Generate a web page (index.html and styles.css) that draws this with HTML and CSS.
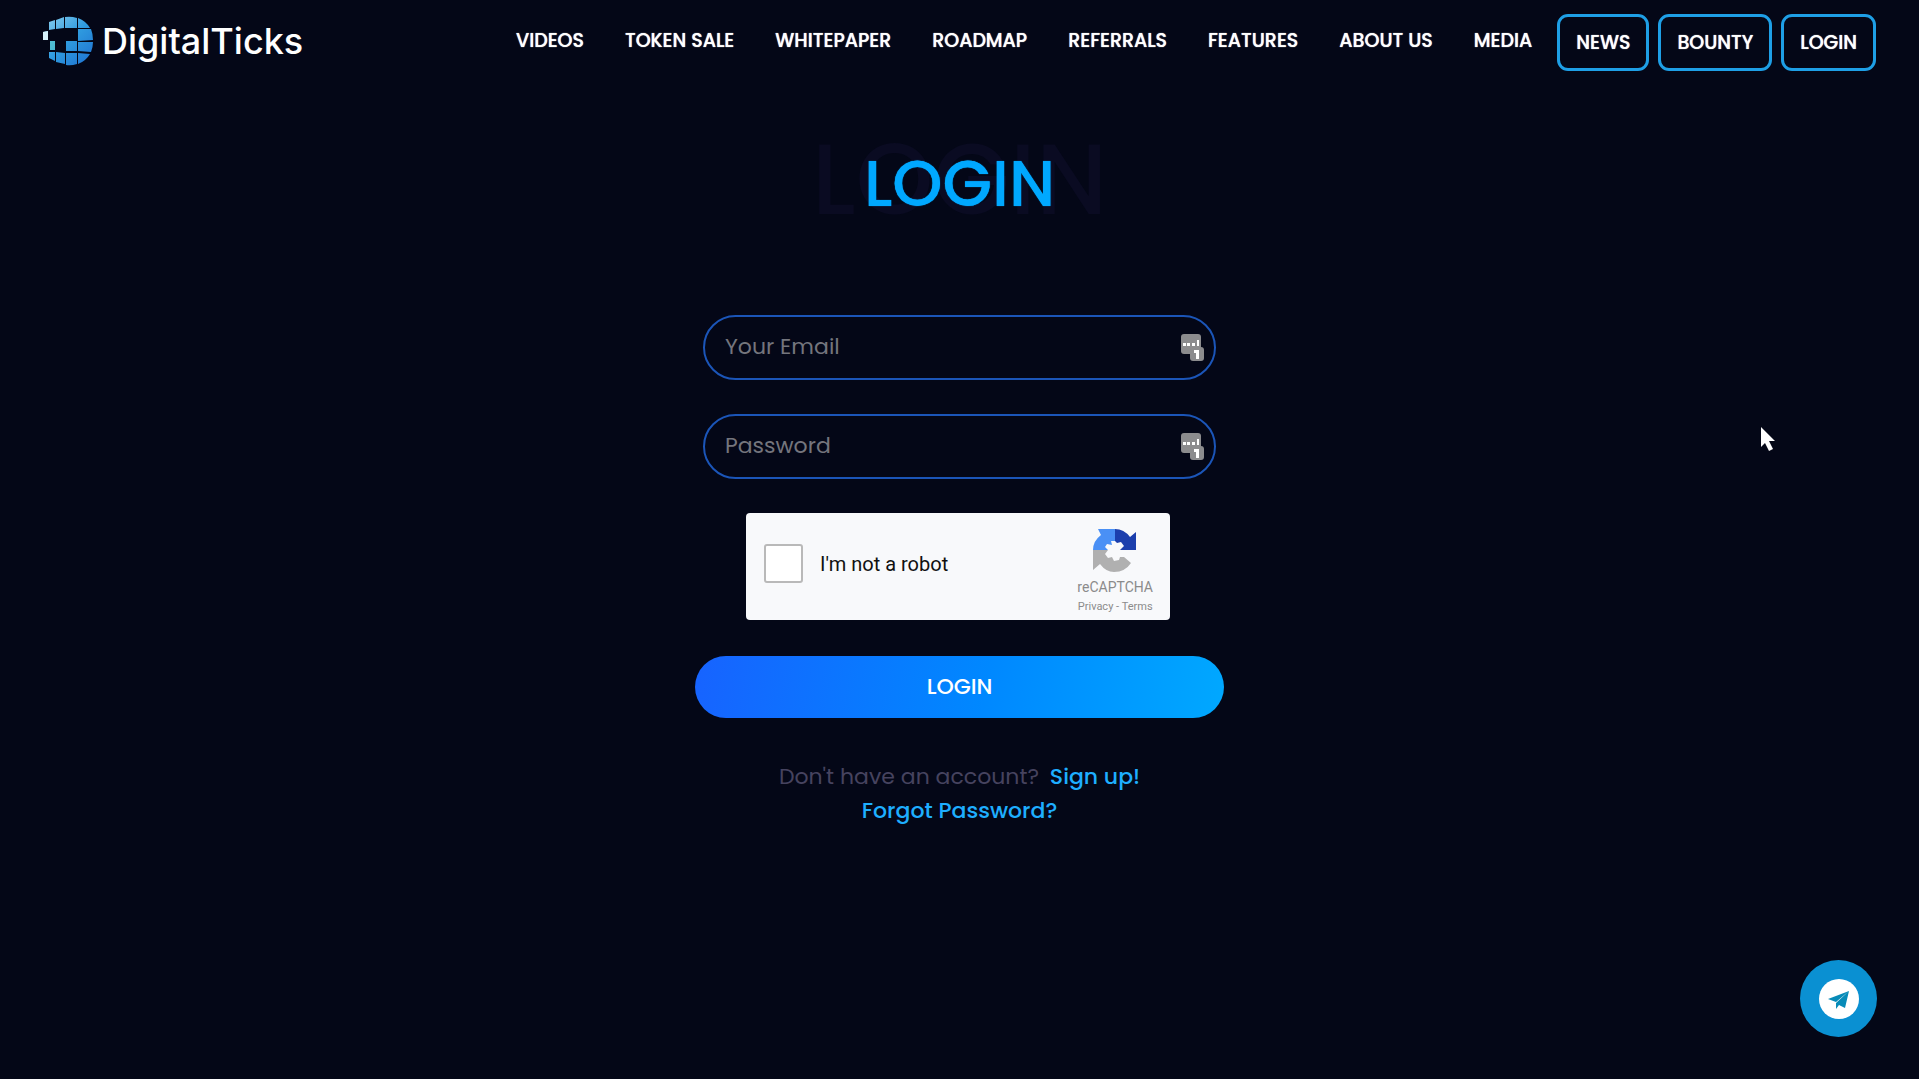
FILE: index.html
```html
<!DOCTYPE html>
<html lang="en">
<head>
<meta charset="utf-8">
<meta name="viewport" content="width=device-width, initial-scale=1">
<title>DigitalTicks - Login</title>
<link rel="stylesheet" href="styles.css">
</head>
<body>
<header class="header">
  <a class="brand" href="#">
    <svg class="brand-mark" viewBox="0 0 50 50" aria-hidden="true">
      <defs>
        <linearGradient id="globe" x1="0" y1="0" x2="1" y2="1">
          <stop offset="0" stop-color="#8ed0ee"/>
          <stop offset=".5" stop-color="#2f9bdf"/>
          <stop offset="1" stop-color="#1d6fd0"/>
        </linearGradient>
      </defs>
      <path fill="url(#globe)" d="M6 6l6-2v9l-6 1zM13 4l8-3v11l-8 1zM22 1q6-1 12 1v10l-12 0zM35 2q8 3 12 10h-12zM35 13h13q2 5 2 11l-15 1zM0 16l5-1v9H0zM35 26h15q0 5-2 10l-13-1zM7 25h5v9H7zM23 25h11v10H23zM6 36h6v9l-6-3zM13 36l9 1v11l-9-2zM23 37h11v11q-6 2-11 1zM35 37l12 1q-4 7-12 10z"/>
      <path fill="#54c9c8" opacity=".6" d="M7 25h5v9H7z"/>
      <path fill="#d5f0fa" d="M0 16l5-1v9H0z"/>
    </svg>
    <span class="brand-name">DigitalTicks</span>
  </a>
  <nav class="nav">
    <a href="#">VIDEOS</a>
    <a href="#">TOKEN SALE</a>
    <a href="#">WHITEPAPER</a>
    <a href="#">ROADMAP</a>
    <a href="#">REFERRALS</a>
    <a href="#">FEATURES</a>
    <a href="#">ABOUT US</a>
    <a href="#">MEDIA</a>
  </nav>
  <div class="nav-boxes">
    <a href="#">NEWS</a>
    <a href="#">BOUNTY</a>
    <a href="#">LOGIN</a>
  </div>
</header>

<main class="login">
  <h1 class="title" data-shadow="LOGIN">LOGIN</h1>
  <form class="form">
    <div class="field">
      <input type="email" placeholder="Your Email" aria-label="Your Email">
      <svg class="field-icon" viewBox="0 0 23 27" aria-hidden="true">
        <rect width="20" height="20" rx="3" fill="#8c8c8e"/>
        <path d="M2 9h3v3H2zM6 9h3v3H6zM11 9h3v3h-3zM16 6h2v6h-2z" fill="#fff"/>
        <rect x="9" y="13" width="14" height="14" rx="3" fill="#8c8c8e"/>
        <path d="M13 16h5v9h-3v-6h-2z" fill="#fff"/>
      </svg>
    </div>
    <div class="field">
      <input type="password" placeholder="Password" aria-label="Password">
      <svg class="field-icon" viewBox="0 0 23 27" aria-hidden="true">
        <rect width="20" height="20" rx="3" fill="#8c8c8e"/>
        <path d="M2 9h3v3H2zM6 9h3v3H6zM11 9h3v3h-3zM16 6h2v6h-2z" fill="#fff"/>
        <rect x="9" y="13" width="14" height="14" rx="3" fill="#8c8c8e"/>
        <path d="M13 16h5v9h-3v-6h-2z" fill="#fff"/>
      </svg>
    </div>
    <div class="captcha">
      <label class="captcha-check"><input type="checkbox">I'm not a robot</label>
      <div class="captcha-brand">
        <svg class="captcha-logo" viewBox="0 0 44 44" aria-hidden="true">
          <path fill="#4a90f5" d="M5 1h17v12l-4 0 1 4-5-1-2 3 3 3H0Q0 13 8 7z"/>
          <path fill="#1c3fad" d="M22 1q9 0 15 8l6-5v18H27l4-4-3-4-4 1-2-2z"/>
          <path fill="#b0b0b0" d="M0 22h15l-3 4 3 4 4-1 2 4 5-1 1-3 4 0 7 6q-6 9-17 9-8 0-14-8l-7 6z"/>
        </svg>
        <span class="captcha-name">reCAPTCHA</span>
        <span class="captcha-links"><a href="#">Privacy</a> - <a href="#">Terms</a></span>
      </div>
    </div>
    <button class="submit" type="submit">LOGIN</button>
  </form>
  <div class="links">
    <p>Don't have an account? <a class="signup" href="#">Sign up!</a></p>
    <p><a href="#">Forgot Password?</a></p>
  </div>
</main>

<a class="telegram" href="#" aria-label="Telegram">
  <svg viewBox="0 0 40 40" aria-hidden="true">
    <circle cx="20" cy="20" r="20" fill="#fff"/>
    <path fill="#078bb8" d="M9 20l21-8-13 11zM30 12l-4 17-6-3-3 4v-6z"/>
  </svg>
</a>
<svg class="cursor" viewBox="0 0 16 26" aria-hidden="true">
  <path fill="#fff" d="M1 0v20l4-4 4 8 4-2-4-8h6z"/>
</svg>
</body>
</html>
```
FILE: styles.css
```css
* { box-sizing: border-box; }

body {
  margin: 0;
  min-height: 100vh;
  background: #040717;
  color: #fff;
  font-family: Poppins, Lato, sans-serif;
  font-size: 22px;
}

a { color: inherit; text-decoration: none; }

.header {
  display: flex;
  align-items: flex-start;
  padding: 14px 43px 0;
}

.brand { display: flex; align-items: center; gap: 9px; height: 54px; }
.brand-mark { width: 50px; height: 50px; }
.brand-name { font-family: Inter, sans-serif; font-size: 36px; font-weight: 500; line-height: 48px; }

.nav,
.nav-boxes {
  display: flex;
  font-size: 19px;
  font-weight: 500;
  line-height: 53px;
  text-shadow: 0 0 1px #fff;
  white-space: nowrap;
}
.nav {
  gap: 41px;
  margin-left: auto;
}
.nav-boxes {
  gap: 9px;
  margin-left: 25px;
}
.nav-boxes a {
  padding: 0 17px;
  border: 3px solid #1e9fe6;
  border-radius: 11px;
  margin-right: 0;
  padding: 0 16px;
  line-height: 51px;
}

.login {
  display: flex;
  flex-direction: column;
  align-items: center;
}

.title {
  position: relative;
  z-index: 0;
  margin: 73px 0 0;
  color: #00a8ff;
  font-size: 64px;
  font-weight: 500;
  line-height: 80px;
  text-shadow: 0 0 1px #00a8ff;
}
.title::before {
  content: attr(data-shadow);
  position: absolute;
  z-index: -1;
  left: 50%;
  bottom: 0;
  transform: translateX(-50%);
  color: #0a0b22;
  font-size: 99px;
  line-height: 88px;
  text-shadow: none;
}

.form {
  display: flex;
  flex-direction: column;
  align-items: center;
  width: 100%;
  max-width: 529px;
  margin-top: 91px;
}

.field {
  position: relative;
  width: 100%;
  padding: 0 8px;
  margin-bottom: 34px;
}
.field input {
  display: block;
  width: 100%;
  height: 65px;
  padding: 0 60px 2px 20px;
  border: 2px solid #1b55b8;
  border-radius: 33px;
  background: transparent;
  color: #fff;
  font: inherit;
}
.field input::placeholder { color: #74757d; opacity: 1; }
.field-icon {
  position: absolute;
  right: 20px;
  top: 19px;
  width: 23px;
  height: 27px;
}

.captcha {
  display: flex;
  justify-content: space-between;
  width: 424px;
  height: 107px;
  margin-right: 3px;
  padding: 0 17px;
  border-radius: 4px;
  background: #f8f9fb;
  font-family: Roboto, sans-serif;
}
.captcha-check {
  display: flex;
  align-items: center;
  gap: 17px;
  padding-bottom: 6px;
  color: #111;
  font-size: 20px;
}
.captcha-check input {
  appearance: none;
  width: 39px;
  height: 39px;
  margin: 0 0 0 1px;
  border: 2px solid #b9b9b9;
  border-radius: 3px;
  background: #fff;
}
.captcha-brand {
  display: flex;
  flex-direction: column;
  align-items: center;
  padding-top: 15px;
  color: #8b8b8b;
}
.captcha-logo { width: 44px; height: 44px; }
.captcha-name { margin-top: 5px; font-size: 14px; line-height: 20px; }
.captcha-links { font-size: 11px; line-height: 20px; }

.submit {
  width: 100%;
  height: 62px;
  margin-top: 36px;
  padding-bottom: 2px;
  border: 0;
  border-radius: 31px;
  background: linear-gradient(100deg, #1763ff, #0088ff 55%, #00a8ff);
  color: #fff;
  font: inherit;
  font-weight: 500;
}

.links {
  margin-top: 42px;
  color: #46435f;
  text-align: center;
  line-height: 34px;
}
.links p { margin: 0; }
.links a { color: #1eaeff; font-weight: 500; }
.links .signup { margin-left: 5px; }

.telegram {
  position: fixed;
  right: 42px;
  bottom: 42px;
  display: grid;
  place-items: center;
  width: 77px;
  height: 77px;
  border-radius: 50%;
  background: #0a90d2;
}
.telegram svg { width: 40px; height: 40px; }

.cursor {
  position: absolute;
  left: 1760px;
  top: 427px;
  width: 16px;
  height: 26px;
}
```
